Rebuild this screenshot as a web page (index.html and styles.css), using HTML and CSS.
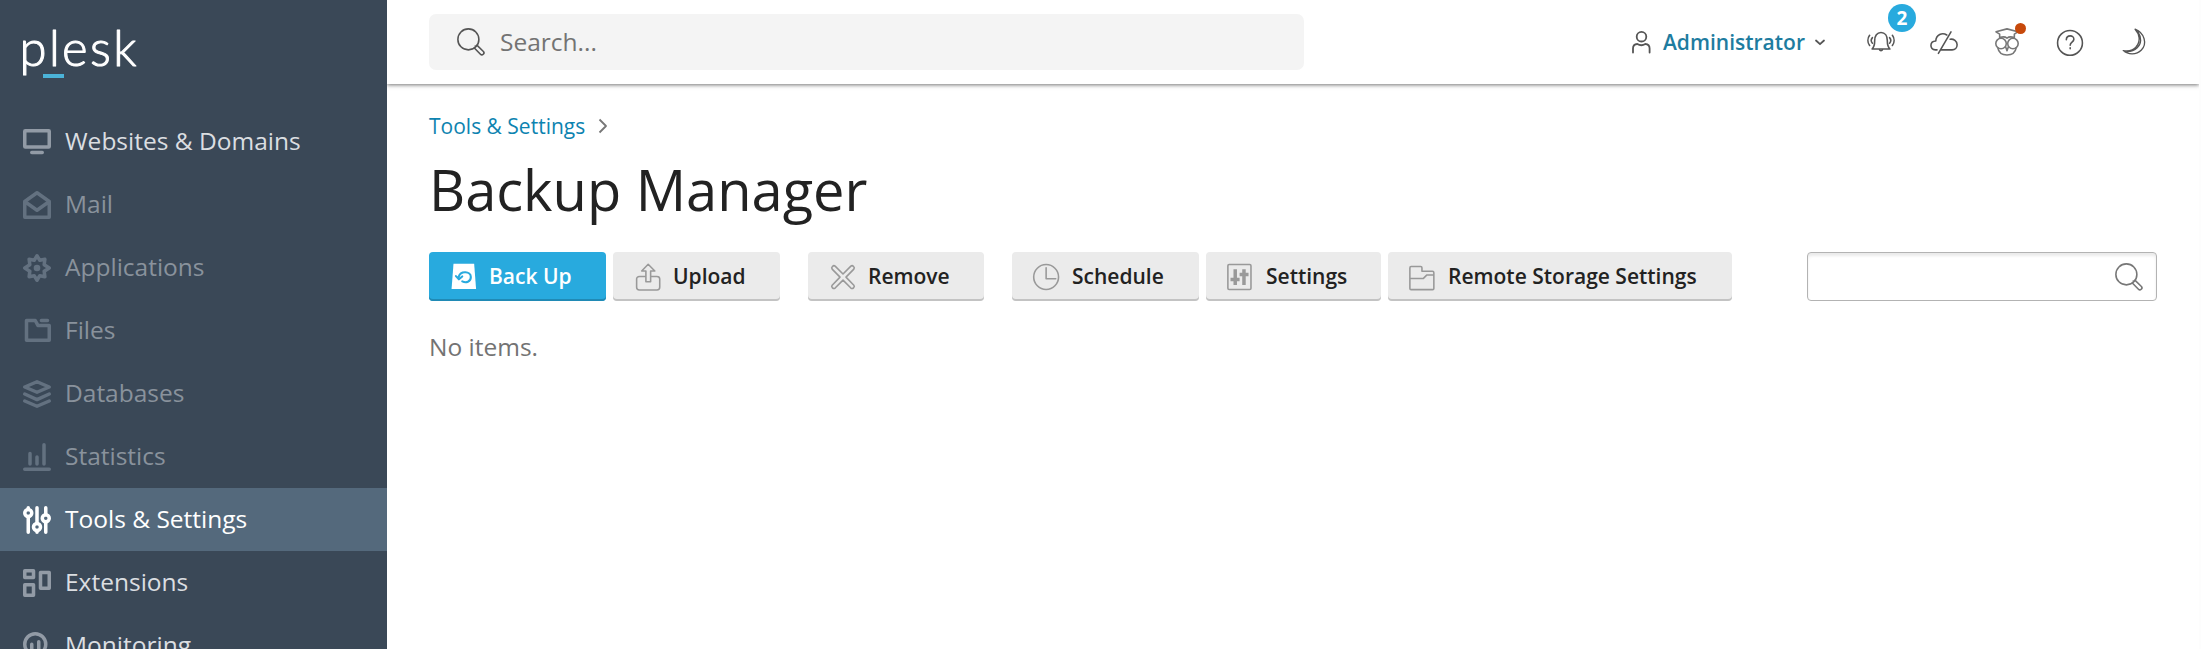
FILE: index.html
```
<!DOCTYPE html>
<html lang="en">
<head>
<meta charset="utf-8">
<title>Backup Manager</title>
<link rel="stylesheet" href="styles.css">
</head>
<body>
<aside class="sidebar">
  <a class="logo"><svg width="124" height="56" viewBox="0 0 124 56"><text class="logo-text" x="-2.500" y="37.500" textLength="117" lengthAdjust="spacing">plesk</text><path d="M21 48h21" stroke="#4bb3d8" stroke-width="4"/></svg></a>
  <nav class="nav">
    <a class="nav-item"><svg class="icon" viewBox="0 0 16 16"><rect x="1" y="1.5" width="14" height="9.3" rx=".3"/><path d="M5 14h6"/></svg><span>Websites &amp; Domains</span></a>
    <a class="nav-item muted"><svg class="icon" viewBox="0 0 16 16"><path d="M1 6v9h14V6L8 1zM1 6l7 5 7-5"/></svg><span>Mail</span></a>
    <a class="nav-item muted"><svg class="icon" viewBox="0 0 16 16"><path d="M8 1 9.6 3.6 12.5 3 12.1 6.1 15 8 12.1 9.9 12.5 13 9.6 12.4 8 15 6.4 12.4 3.5 13 3.9 9.9 1 8 3.9 6.1 3.5 3 6.4 3.6z"/><circle class="solid" cx="8" cy="8" r="1.9"/></svg><span>Applications</span></a>
    <a class="nav-item muted"><svg class="icon" viewBox="0 0 16 16"><path d="M2 2v11.3h13V4.8H8.5L7 2zM10.5 2H14"/></svg><span>Files</span></a>
    <a class="nav-item muted"><svg class="icon" viewBox="0 0 16 16"><path d="M1 4l7-3 7 3-7 3zM1 8l7 3.2L15 8M1 12l7 3 7-3"/></svg><span>Databases</span></a>
    <a class="nav-item muted"><svg class="icon" viewBox="0 0 16 16"><path d="M1 15h14M4 6v6M8 8v4M12 1v11"/></svg><span>Statistics</span></a>
    <a class="nav-item active"><svg class="icon" viewBox="0 0 16 16"><path d="M3 1v1M3 6v9M8 1v9M8 14v1M13 1v4M13 9v6"/><circle cx="3" cy="4" r="2"/><circle cx="8" cy="12" r="2"/><circle cx="13" cy="7" r="2"/></svg><span>Tools &amp; Settings</span></a>
    <a class="nav-item"><svg class="icon" viewBox="0 0 16 16"><rect x="1" y="1" width="5" height="3.8"/><rect x="1" y="9" width="5" height="6"/><rect x="10" y="2" width="5" height="9"/></svg><span>Extensions</span></a>
    <a class="nav-item"><svg class="icon" viewBox="0 0 16 16"><circle cx="7" cy="7" r="6"/><path d="M5 7v4M9 5.500v6M12 12l3 3"/></svg><span>Monitoring</span></a>
  </nav>
</aside>
<div class="page">
  <header class="header">
    <div class="search"><svg class="icon thin" viewBox="0 0 16 16"><circle cx="6.5" cy="6.500" r="6"/><path d="M9.900 11.400l3.500 3.600c1 1 2.700-.5 1.700-1.600L11.500 9.900M10.700 10.600l-.3-.3"/></svg><span>Search...</span></div>
    <div class="tools">
      <a class="account"><svg width="20" height="24" viewBox="0 0 20 24"><circle cx="10.500" cy="6.700" r="4.800"/><path d="M2 22.500v-4c0-3 1.500-4.300 4.300-4.500 2.500 1.600 5.500 1.600 8 0 2.800.2 4.300 1.500 4.300 4.500v4"/></svg><span>Administrator</span><svg class="caret" width="10" height="8" viewBox="0 0 10 8"><path d="M1 2.500l4 3.700 4-3.700"/></svg></a>
      <a class="tool"><svg class="icon thin" viewBox="0 0 16 16"><path d="M2.900 12c1.300-1.100 1.500-2.300 1.500-4.800 0-2.700 1.300-4.600 3.600-4.600s3.600 1.900 3.600 4.600c0 2.500.2 3.700 1.500 4.800zM7.200 12.500c.2.700 1.400.7 1.600 0M3.100 5.500c-.8.900-.8 2.300 0 3.200M1.500 4.200c-1.300 1.700-1.300 4.100 0 5.800M12.900 5.500c.8.900.8 2.300 0 3.200M14.500 4.200c1.300 1.700 1.300 4.100 0 5.800"/></svg><b class="badge">2</b></a>
      <a class="tool"><svg class="icon thin" viewBox="0 0 16 16"><path d="M4 12.500H3.100c-3.500-.3-3.400-5 .2-5.100C3.500 3.800 7 2.300 9.600 4M11.500 6.400c2-.3 4 1.100 4 3.200 0 1.600-1.200 2.900-2.900 2.900H6.400M12 2.200L4.800 14.500"/></svg></a>
      <a class="tool owl"><svg class="icon thin" viewBox="0 0 16 16"><path d="M1.700 2.200L8 .5l6.200 1.700-2 1.300v2.200C10.500 4.800 9 5 8 5.800 7 5 5.500 4.800 3.800 5.700V3.500zM2.700 11.200c.5 2.700 2.500 4.200 5.300 4.200s4.800-1.500 5.300-4.200M7.200 10.700L8 13l.8-2.300"/><circle cx="4.600" cy="8.900" r="3"/><circle cx="11.400" cy="8.900" r="3"/></svg><i class="dot"></i></a>
      <a class="tool"><svg class="icon thin" viewBox="0 0 16 16"><circle cx="8" cy="8.500" r="7.100"/><path d="M5.900 6.700c.1-3 4.500-2.800 4.300-.2C10.100 8.100 8.100 8.100 8.100 9.800M8.100 11.300v.5"/></svg></a>
      <a class="tool"><svg class="icon crescent" viewBox="0 0 16 16"><path d="M9.200 .7c5.500 2.200 7 8.300 3.600 11.900-2.900 3-7.700 2.700-10.400.3 2.800.5 5.800-.2 7.500-2.300C12.300 7.800 12 3.700 9.200.7zM10.800 2c2.300 3.500 2 7.200-.4 9.300-1.600 1.600-3.500 2.200-5.800 2.200"/></svg></a>
    </div>
  </header>
  <main class="content">
    <div class="crumbs"><a>Tools &amp; Settings</a><svg width="10" height="16" viewBox="0 0 10 16"><path d="M1.500 1.500L8 8l-6.500 6.500"/></svg></div>
    <h1 class="title">Backup Manager</h1>
    <div class="toolbar">
      <div class="group">
        <a class="btn primary w-backup"><svg class="icon thin" viewBox="0 0 16 16"><path class="solid" d="M2 .4h11.800l1.100 14.400H.9z"/><path class="arrow" d="M5 7.800C6 4.300 11.900 4.600 11.900 8c0 2.900-2.800 3.500-4.900 2.500M3.400 7.500l1.700 1.800L7 7.700"/></svg><span>Back Up</span></a>
        <a class="btn w-upload"><svg class="icon thin" viewBox="0 0 16 16"><path d="M6.800 7.700H3.100c-1 0-1.600.6-1.600 1.500v4.700c0 .9.600 1.500 1.600 1.500h10c1 0 1.600-.6 1.600-1.500V9.200c0-.9-.6-1.500-1.600-1.500H9.500M6.800 10.700V4.600H4.400L8.100.7l3.800 3.900H9.500v6.100z"/></svg><span>Upload</span></a>
      </div>
      <div class="group">
        <a class="btn w-remove"><svg class="icon thin" viewBox="0 0 16 16"><path d="M3.500 1.800L8 6.300l4.500-4.500c1-.8 2.500.7 1.700 1.700L9.700 8.100l4.500 4.600c.8 1-.7 2.400-1.700 1.600L8 9.800l-4.500 4.500c-1 .8-2.500-.6-1.700-1.600l4.500-4.600-4.500-4.600c-.8-1 .7-2.500 1.700-1.700z"/></svg><span>Remove</span></a>
      </div>
      <div class="group">
        <a class="btn w-schedule"><svg class="icon thin" viewBox="0 0 16 16"><circle cx="7.500" cy="8" r="7.100"/><path d="M7.500 2.700V9H13"/></svg><span>Schedule</span></a>
        <a class="btn w-settings"><svg class="icon thin" viewBox="0 0 16 16"><rect x=".5" y=".9" width="13.200" height="14.200" rx=".7"/><path class="bold" d="M4.700 3.500v9M2 9.400h5.200M9.700 3.500v9M7.200 6.600h5.100"/></svg><span>Settings</span></a>
        <a class="btn w-remote"><svg class="icon thin" viewBox="0 0 16 16"><path d="M.5 2.800c0-.6.200-.8.700-.8h5.500c.5 0 .7.200.7.700v2h6c.5 0 .8.300.8.800v9.100c0 .4-.2.600-.7.600H1.200c-.5 0-.7-.2-.7-.6zM.5 8.900h7.600l2-2h4"/></svg><span>Remote Storage Settings</span></a>
      </div>
      <div class="filter"><svg class="icon thin" viewBox="0 0 16 16"><circle cx="6.500" cy="6.500" r="6"/><path d="M9.900 11.400l3.500 3.600c1 1 2.700-.5 1.700-1.600L11.500 9.900M10.700 10.600l-.3-.3"/></svg></div>
    </div>
    <p class="empty">No items.</p>
  </main>
</div>
</body>
</html>
```
FILE: styles.css
```
* { box-sizing: border-box; }
body { margin: 0; height: 649px; display: flex; overflow: hidden; background: #fdfdfd; color: #222; font-family: "Open Sans", "Noto Sans", sans-serif; font-size: 24.5px; }
svg { display: block; flex: none; fill: none; stroke: currentColor; stroke-linecap: round; stroke-linejoin: round; overflow: visible; }
.icon { width: 28px; height: 28px; stroke-width: 2; }
.thin { stroke-width: .9; }
.crescent { stroke-width: .75; }
.solid { fill: currentColor; stroke: none; }
.bold { stroke-width: 2; stroke-linecap: butt; }

.sidebar { width: 387px; flex: none; background: #3a4857; }
.logo { display: block; height: 110px; padding: 28px 0 0 22px; }
.logo svg { stroke-linecap: butt; }
.logo-text { fill: #fff; stroke: #fff; stroke-width: 1px; font-family: Lato, sans-serif; font-weight: 300; font-size: 49px; }
.nav-item { display: flex; align-items: center; gap: 14px; height: 63px; padding-left: 23px; color: #dbdee1; white-space: nowrap; }
.nav-item span { line-height: 33px; padding-bottom: 2px; }
.nav-item .icon { color: #929ba6; }
.nav-item.muted { color: #89929c; }
.nav-item.muted .icon { color: #637180; }
.nav-item.active { background: #54697c; color: #fff; }
.nav-item.active .icon { color: #fff; }

.page { width: 1812px; display: flex; flex-direction: column; background: #fff; }
.header { display: flex; align-items: center; justify-content: space-between; height: 84px; flex: none; padding: 0 52px 0 42px; box-shadow: 0 1px 4px rgba(0,0,0,.55); clip-path: inset(0 0 -8px 0); }
.search { display: flex; align-items: center; gap: 15px; width: 875px; height: 56px; padding-left: 28px; border-radius: 7px; background: #f4f4f4; color: #737373; }
.search span { padding-bottom: 2px; }
.search .icon { color: #555; }
.tools { display: flex; align-items: center; gap: 35px; color: #555; }
.account { display: flex; align-items: center; font-size: 21px; font-weight: 600; color: #1e7c9f; margin-right: 7px; }
.account svg { color: #555; stroke-width: 1.8; }
.account span { margin: 0 10px 0 12px; }
.tool { position: relative; color: #555; }
.owl { color: #777; }
.badge { position: absolute; left: 21px; top: -24px; width: 28px; height: 28px; border-radius: 50%; background: #28aade; color: #fff; font-size: 19px; line-height: 28px; text-align: center; }
.dot { position: absolute; left: 22px; top: -5px; width: 11px; height: 11px; border-radius: 50%; background: #c7490b; }

.content { padding: 26px 42px 0; }
.crumbs { display: flex; align-items: center; gap: 13px; height: 32px; font-size: 21px; color: #0d83b0; }
.crumbs svg { color: #777; stroke-width: 1.8; stroke-linecap: butt; }
.title { margin: 9px 0 0; font-size: 56px; line-height: 76px; font-weight: 400; }
.toolbar { display: flex; gap: 28px; margin-top: 25px; }
.group { display: flex; gap: 7px; }
.btn { display: flex; align-items: center; gap: 11px; height: 49px; padding-left: 21px; border-radius: 4px; background: #ebebeb; box-shadow: inset 0 -2px #c3c3c3; font-size: 21px; font-weight: 600; white-space: nowrap; }
.btn span { padding-bottom: 2px; }
.btn .icon { color: #999; }
.btn.primary { background: #28aade; box-shadow: inset 0 -2px #208ab5; color: #fff; }
.btn.primary .icon { color: #fff; }
.arrow { stroke: #28aade; stroke-width: 1.200; }
.w-backup { width: 177px; }
.w-upload { width: 167px; }
.w-remove { width: 176px; }
.w-schedule { width: 187px; }
.w-settings { width: 175px; }
.w-remote { width: 344px; }
.filter { display: flex; align-items: center; justify-content: flex-end; width: 350px; height: 49px; margin-left: auto; padding-right: 13px; border: 1px solid #b3b3b3; border-radius: 4px; box-shadow: inset 0 3px 3px #ebebeb; color: #777; }
.empty { margin: 28px 0 0; line-height: 35px; color: #737373; }
```
